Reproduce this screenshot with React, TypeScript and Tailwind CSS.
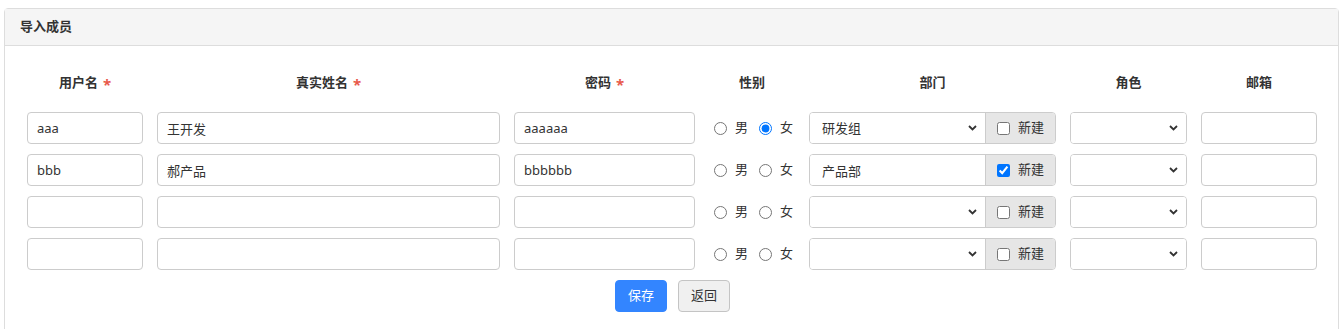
import React from 'react';

type Row = {
  user: string;
  name: string;
  pwd: string;
  gender: '' | 'm' | 'f';
  dept: string;
  deptText: boolean;
  newDept: boolean;
};

const rows: Row[] = [
  { user: 'aaa', name: '王开发', pwd: 'aaaaaa', gender: 'f', dept: '研发组', deptText: false, newDept: false },
  { user: 'bbb', name: '郝产品', pwd: 'bbbbbb', gender: '', dept: '产品部', deptText: true, newDept: true },
  { user: '', name: '', pwd: '', gender: '', dept: '', deptText: false, newDept: false },
  { user: '', name: '', pwd: '', gender: '', dept: '', deptText: false, newDept: false },
];

const cols = 'grid grid-cols-[116px_343px_181px_86px_247px_117px_116px] gap-x-[14px]';
const inputCls =
  'h-[32px] w-full rounded-[4px] border border-[#cccccc] bg-white px-[9px] text-[13px] text-[#333] outline-none';

function Chevron() {
  return (
    <svg
      className="pointer-events-none absolute right-[8px] top-1/2 -translate-y-1/2"
      width="9"
      height="6"
      viewBox="0 0 9 6"
      fill="none"
    >
      <path d="M1 1l3.5 3.5L8 1" stroke="#333" strokeWidth="1.8" />
    </svg>
  );
}

function Select({ value, className }: { value: string; className: string }) {
  return (
    <div className={`relative ${className}`}>
      <select
        defaultValue={value}
        className="h-[32px] w-full appearance-none bg-white pl-[12px] pr-[24px] text-[13px] text-[#333] outline-none"
      >
        <option value=""></option>
        <option value="研发组">研发组</option>
        <option value="产品部">产品部</option>
      </select>
      <Chevron />
    </div>
  );
}

function Label({ text, required }: { text: string; required?: boolean }) {
  return (
    <div className="flex items-center justify-center text-[13px] font-bold text-[#333]">
      {text}
      {required && <span className="ml-[5px] mt-[2px] text-[15px] leading-none text-[#e8594b]">*</span>}
    </div>
  );
}

export default function App() {
  return (
    <div className="min-h-[329px] bg-white pt-[8px] pl-[4px] font-['Noto_Sans','Noto_Sans_CJK_SC',sans-serif]">
      <div className="w-[1335px] rounded-t-[4px] border border-[#dddddd] bg-white">
        <div className="flex h-[37px] items-center border-b border-[#dddddd] bg-[#f5f5f5] px-[15px] text-[13px] font-bold text-[#333]">
          导入成员
        </div>

        <div className="px-[22px] pt-[16px] pb-[30px]">
          <div className={`${cols} h-[42px] items-center`}>
            <Label text="用户名" required />
            <Label text="真实姓名" required />
            <Label text="密码" required />
            <Label text="性别" />
            <Label text="部门" />
            <Label text="角色" />
            <Label text="邮箱" />
          </div>

          <div className="mt-[8px] flex flex-col gap-[10px]">
            {rows.map((r, i) => (
              <div key={i} className={`${cols} items-center`}>
                <input className={inputCls} defaultValue={r.user} />
                <input className={inputCls} defaultValue={r.name} />
                <input className={inputCls} defaultValue={r.pwd} type="text" />

                <div className="flex items-center gap-[11px] pl-[5px] text-[13px] text-[#333]">
                  <label className="flex items-center gap-[8px]">
                    <input
                      type="radio"
                      name={`g${i}`}
                      defaultChecked={r.gender === 'm'}
                      className="h-[13px] w-[13px]"
                    />
                    男
                  </label>
                  <label className="flex items-center gap-[8px]">
                    <input
                      type="radio"
                      name={`g${i}`}
                      defaultChecked={r.gender === 'f'}
                      className="h-[13px] w-[13px]"
                    />
                    女
                  </label>
                </div>

                <div className="flex h-[32px] overflow-hidden rounded-[4px] border border-[#cccccc]">
                  {r.deptText ? (
                    <input
                      defaultValue={r.dept}
                      className="h-full w-[175px] bg-white pl-[12px] text-[13px] text-[#333] outline-none"
                    />
                  ) : (
                    <Select value={r.dept} className="w-[175px]" />
                  )}
                  <label className="flex flex-1 items-center gap-[8px] border-l border-[#cccccc] bg-[#e6e6e6] pl-[11px] text-[13px] text-[#333]">
                    <input type="checkbox" defaultChecked={r.newDept} className="h-[13px] w-[13px]" />
                    新建
                  </label>
                </div>

                <div className="overflow-hidden rounded-[4px] border border-[#cccccc]">
                  <Select value="" className="w-full [&>select]:h-[30px]" />
                </div>
                <input className={inputCls} />
              </div>
            ))}
          </div>

          <div className="mt-[10px] flex justify-center gap-[11px] pl-[2px]">
            <button className="h-[32px] w-[52px] rounded-[4px] border border-[#3385ff] bg-[#3385ff] text-[13px] text-white">
              保存
            </button>
            <button className="h-[32px] w-[52px] rounded-[4px] border border-[#c4c4c4] bg-[#f0f0f0] text-[13px] text-[#333]">
              返回
            </button>
          </div>
        </div>
      </div>
    </div>
  );
}
